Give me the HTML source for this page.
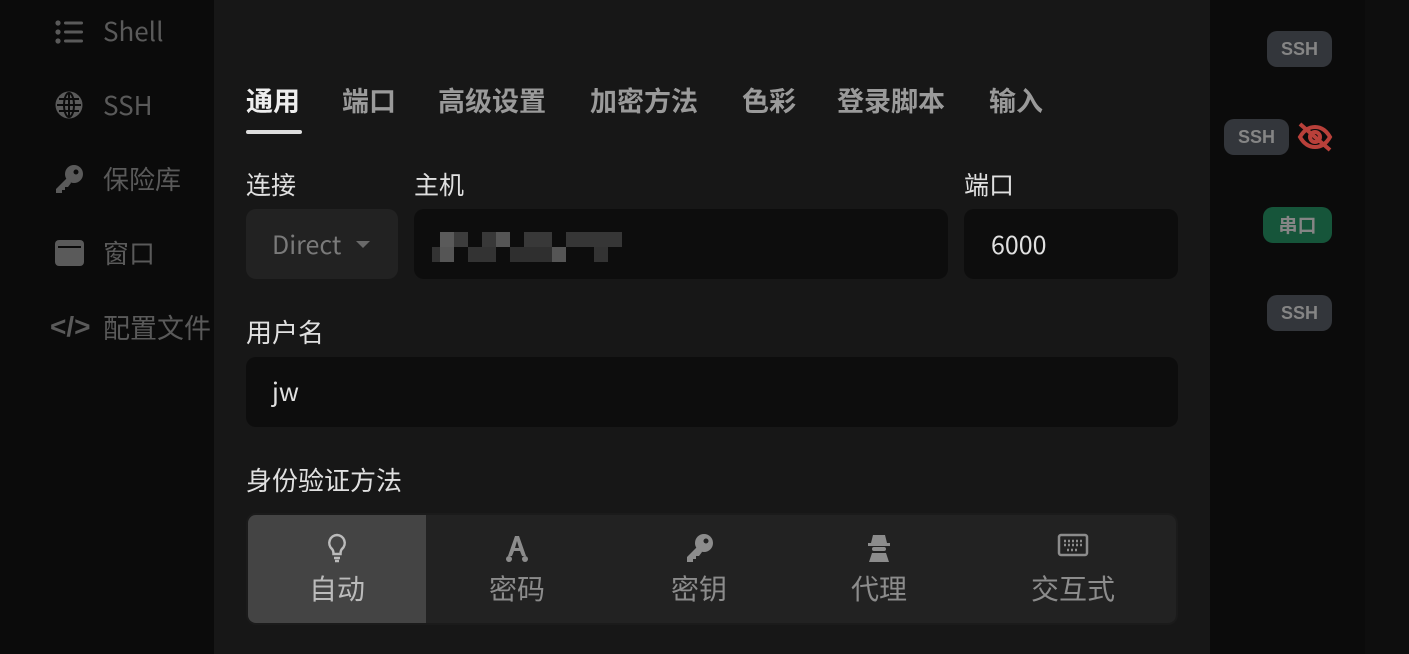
<!DOCTYPE html>
<html><head><meta charset="utf-8"><style>
*{margin:0;padding:0;box-sizing:border-box}
body{width:1409px;height:654px;overflow:hidden;background:#0b0b0b;font-family:"Liberation Sans","Noto Sans CJK SC",sans-serif;position:relative;color:#ddd}
.abs{position:absolute}
.side{color:#5a5a5a;font-size:26px;font-family:"Noto Sans CJK SC",sans-serif}
.side div{position:absolute;left:103px;line-height:30px}
.modal{position:absolute;left:214px;top:0;width:996px;height:654px;background:#171717}
.tab{position:absolute;top:82px;font-size:27px;font-weight:bold;color:#9a9a9a;font-family:"Noto Sans CJK SC",sans-serif;line-height:36px}
.lbl{position:absolute;font-size:25px;color:#e0e0e0;font-family:"Noto Sans CJK SC",sans-serif;line-height:34px}
.inp{position:absolute;background:#0d0d0d;border-radius:10px}
.badge{position:absolute;height:36px;border-radius:10px;background:#33363b;color:#858585;font-weight:bold;font-size:18px;text-align:center;line-height:36px;font-family:"Liberation Sans","Noto Sans CJK SC",sans-serif}
.px{position:absolute;height:15px}
.opt{position:absolute;top:0;height:108px;text-align:center;color:#8c8c8c;font-size:28px;font-family:"Noto Sans CJK SC",sans-serif}
.opt span{position:absolute;left:0;right:0;top:55px;line-height:36px}
.opt svg{position:absolute;top:18px;left:50%;transform:translateX(-50%)}
</style></head><body>
<div class="abs" style="left:1365px;top:0;width:44px;height:654px;background:#0e0e0e"></div>
<div class="side">
 <svg class="abs" style="left:55px;top:20px" width="30" height="24" viewBox="0 0 30 24" fill="#5a5a5a"><circle cx="3" cy="3" r="2.6"/><circle cx="3" cy="12" r="2.6"/><circle cx="3" cy="21" r="2.6"/><rect x="9" y="1.5" width="19" height="3" rx="1.5"/><rect x="9" y="10.5" width="19" height="3" rx="1.5"/><rect x="9" y="19.5" width="19" height="3" rx="1.5"/></svg>
 <div style="top:16px">Shell</div>
 <svg class="abs" style="left:55px;top:91px" width="28" height="28" viewBox="0 0 28 28" fill="none" stroke="#5a5a5a" stroke-width="3"><circle cx="14" cy="14" r="12" fill="#5a5a5a"/><path d="M2 14h24M14 2v24M4 8h20M4 20h20" stroke="#0b0b0b" stroke-width="2"/><ellipse cx="14" cy="14" rx="5" ry="12" stroke="#0b0b0b" stroke-width="2"/></svg>
 <div style="top:90px">SSH</div>
 <svg class="abs" style="left:54px;top:164px" width="30" height="30" viewBox="0 0 30 30" fill="#5a5a5a"><circle cx="20" cy="10" r="9"/><path d="M14 13L2 25v4h6v-3h3v-3h3l3-4z"/><circle cx="22" cy="8" r="2.5" fill="#0b0b0b"/></svg>
 <div style="top:164px">保险库</div>
 <svg class="abs" style="left:55px;top:240px" width="29" height="26" viewBox="0 0 29 26"><rect width="29" height="26" rx="4" fill="#5a5a5a"/><rect x="3" y="6" width="23" height="2" fill="#0b0b0b"/></svg>
 <div style="top:238px">窗口</div>
 <div style="left:50px;top:312px;font-family:'Liberation Sans',sans-serif;font-size:28px;font-weight:bold">&lt;/&gt;</div>
 <div style="top:312px;font-size:27px">配置文件</div>
</div>
<div class="modal">
 <div class="tab" style="left:32px;color:#eee">通用</div>
 <div class="abs" style="left:32px;top:130px;width:56px;height:4px;background:#ddd;border-radius:2px"></div>
 <div class="tab" style="left:128px">端口</div>
 <div class="tab" style="left:224px">高级设置</div>
 <div class="tab" style="left:376px">加密方法</div>
 <div class="tab" style="left:528px">色彩</div>
 <div class="tab" style="left:623px">登录脚本</div>
 <div class="tab" style="left:775px">输入</div>

 <div class="lbl" style="left:32px;top:167px">连接</div>
 <div class="lbl" style="left:200px;top:167px">主机</div>
 <div class="lbl" style="left:750px;top:167px">端口</div>
 <div class="inp" style="left:32px;top:209px;width:152px;height:70px;background:#222"><span class="abs" style="left:26px;top:19px;font-size:25px;color:#7a7a7a;line-height:32px;font-family:'Noto Sans CJK SC',sans-serif">Direct</span><svg class="abs" style="left:110px;top:32px" width="14" height="8"><path d="M0 0h14L7 7z" fill="#6a6a6a"/></svg></div>
 <div class="inp" style="left:200px;top:209px;width:534px;height:70px">
  <div class="px" style="left:26px;top:23px;width:14px;background:#5a5a5a"></div>
  <div class="px" style="left:40px;top:23px;width:14px;background:#3c3c3c"></div>
  <div class="px" style="left:68px;top:23px;width:14px;background:#383838"></div>
  <div class="px" style="left:82px;top:23px;width:14px;background:#555"></div>
  <div class="px" style="left:110px;top:23px;width:28px;background:#383838"></div>
  <div class="px" style="left:152px;top:23px;width:56px;background:#363636"></div>
  <div class="px" style="left:18px;top:38px;width:8px;background:#333"></div>
  <div class="px" style="left:26px;top:38px;width:14px;background:#555"></div>
  <div class="px" style="left:54px;top:38px;width:28px;background:#333"></div>
  <div class="px" style="left:96px;top:38px;width:42px;background:#2f2f2f"></div>
  <div class="px" style="left:138px;top:38px;width:14px;background:#555"></div>
  <div class="px" style="left:180px;top:38px;width:14px;background:#333"></div>
 </div>
 <div class="inp" style="left:750px;top:209px;width:214px;height:70px"><span class="abs" style="left:27px;top:19px;font-size:25px;color:#e0e0e0;line-height:32px;font-family:'Noto Sans CJK SC',sans-serif">6000</span></div>

 <div class="lbl" style="left:32px;top:315px;font-size:26px">用户名</div>
 <div class="inp" style="left:32px;top:357px;width:932px;height:70px"><span class="abs" style="left:26px;top:18px;font-size:25px;color:#e0e0e0;line-height:32px;font-family:'Noto Sans CJK SC',sans-serif">jw</span></div>

 <div class="lbl" style="left:32px;top:463px;font-size:26px">身份验证方法</div>
 <div class="abs" style="left:32px;top:513px;width:932px;height:112px;background:#222;border-radius:10px;border:2px solid #1b1b1b;overflow:hidden">
  <div class="opt" style="left:0;width:178px;background:#444;color:#bbb"><svg width="22" height="30" viewBox="0 0 22 30" fill="none" stroke="#bbb" stroke-width="2.5"><path d="M11 2a8 8 0 0 0-5 14c1.5 1.5 1.5 4 1.5 5h7c0-1 0-3.5 1.5-5a8 8 0 0 0-5-14z"/><path d="M8 25h6M9 28h4"/></svg><span>自动</span></div>
  <div class="opt" style="left:178px;width:182px"><svg width="26" height="30" viewBox="0 0 26 30" fill="#8c8c8c"><path d="M11 3h4l7 20h-4l-2-5H10l-2 5H4zM11 15h4l-2-7z"/><circle cx="5" cy="26" r="3"/><circle cx="21" cy="26" r="3"/></svg><span>密码</span></div>
  <div class="opt" style="left:360px;width:182px"><svg width="30" height="30" viewBox="0 0 30 30" fill="#8c8c8c"><circle cx="20" cy="10" r="9"/><path d="M14 13L3 24v5h6v-3h3v-3h3l3-4z"/><circle cx="22" cy="8" r="2.5" fill="#222"/></svg><span>密钥</span></div>
  <div class="opt" style="left:542px;width:178px"><svg width="26" height="30" viewBox="0 0 26 30" fill="#8c8c8c"><path d="M7 2h12l2 8H5z"/><rect x="2" y="10" width="22" height="3"/><rect x="6" y="14" width="14" height="4" rx="2"/><path d="M3 29l3-9h14l3 9z"/></svg><span>代理</span></div>
  <div class="opt" style="left:720px;width:210px"><svg width="32" height="26" viewBox="0 0 32 26" fill="none" stroke="#8c8c8c" stroke-width="2.5"><rect x="2" y="2" width="28" height="20" rx="2"/><path d="M7 8h18M7 12h18M10 17h12" stroke-dasharray="2 2"/></svg><span>交互式</span></div>
 </div>
</div>
<div class="badge" style="left:1267px;top:31px;width:65px">SSH</div>
<div class="badge" style="left:1224px;top:119px;width:65px">SSH</div>
<svg class="abs" style="left:1297px;top:122px" width="36" height="30" viewBox="0 0 36 30" fill="none" stroke="#b9403a" stroke-width="4"><path d="M3 15c4-7 9-10 15-10s11 3 15 10c-4 7-9 10-15 10S7 22 3 15z"/><circle cx="18" cy="15" r="5"/><path d="M3 2l30 26" stroke="#b9403a"/></svg>
<div class="badge" style="left:1263px;top:207px;width:69px;background:#16553a;font-family:'Noto Sans CJK SC',sans-serif;font-size:19px">串口</div>
<div class="badge" style="left:1267px;top:295px;width:65px">SSH</div>
</body></html>
